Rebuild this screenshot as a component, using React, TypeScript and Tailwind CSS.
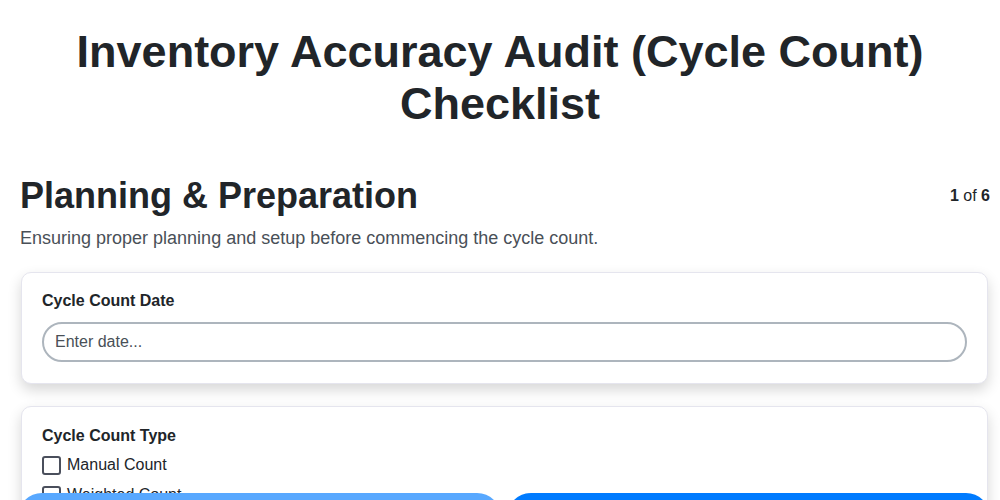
import React from "react";

const font = { fontFamily: '"Liberation Sans", Arial, sans-serif' };

function Checkbox({ label }: { label: string }) {
  return (
    <label className="flex items-center gap-[6px] h-[20px]">
      <span className="w-[19px] h-[19px] border-2 border-[#4a4f5c] rounded-[3px] bg-white shrink-0" />
      <span className="text-[16px] text-[#212529]">{label}</span>
    </label>
  );
}

export default function App() {
  return (
    <div className="min-h-[500px] bg-white text-[#212529] overflow-hidden" style={font}>
      <div className="px-5 pt-[26px]">
        <h1 className="text-center font-bold text-[45px] leading-[52px] text-[#212529]">
          Inventory Accuracy Audit (Cycle Count)
          <br />
          Checklist
        </h1>
      </div>

      <div className="pl-5 pr-[10px]">
        <div className="mt-[45px] flex items-center justify-between">
          <h2 className="font-bold text-[36px] leading-[41px]">Planning &amp; Preparation</h2>
          <div className="text-[16px]">
            <span className="font-bold">1</span> of <span className="font-bold">6</span>
          </div>
        </div>
        <p className="mt-[12px] text-[18px] leading-[21px] text-[#495057]">
          Ensuring proper planning and setup before commencing the cycle count.
        </p>

        <div className="mt-[23px] ml-[1px] mr-[2px] flex flex-col gap-[22px]">
          <div className="border border-[#e5e5ee] rounded-[10px] bg-white px-5 pt-[19px] pb-[21px] shadow-[0_6px_14px_rgba(0,0,0,0.16)]">
            <div className="font-bold text-[16px] leading-[18px]">Cycle Count Date</div>
            <input
              className="mt-[12px] w-full h-[40px] border-2 border-[#adb5bd] rounded-full px-[11px] text-[16px] text-[#212529] placeholder:text-[#495057] outline-none"
              style={font}
              placeholder="Enter date..."
            />
          </div>

          <div className="border border-[#e5e5ee] rounded-[10px] bg-white px-5 pt-[20px] pb-[21px] shadow-[0_6px_14px_rgba(0,0,0,0.16)]">
            <div className="font-bold text-[16px] leading-[18px]">Cycle Count Type</div>
            <div className="mt-[10px] flex flex-col gap-[10px]">
              <Checkbox label="Manual Count" />
              <Checkbox label="Weighted Count" />
              <Checkbox label="Random Count" />
              <Checkbox label="ABC Analysis Count" />
            </div>
          </div>
        </div>
      </div>

      <div className="fixed top-[493px] left-[18px] right-[10px] flex gap-[6px]">
        <button className="flex-1 h-[48px] rounded-full bg-[#58a8ff] text-white text-[16px] font-bold" style={font}>
          Previous
        </button>
        <button className="flex-1 h-[48px] rounded-full bg-[#007bff] text-white text-[16px] font-bold" style={font}>
          Next
        </button>
      </div>
    </div>
  );
}
